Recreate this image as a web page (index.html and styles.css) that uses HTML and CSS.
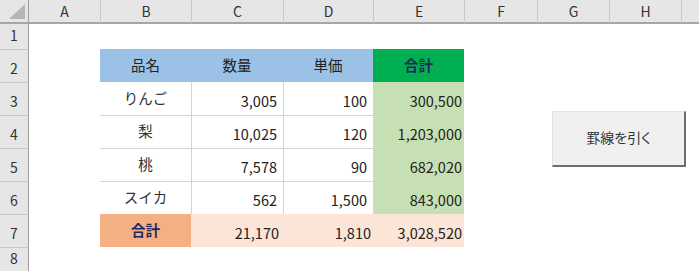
FILE: index.html
```html
<!DOCTYPE html>
<html lang="ja">
<head>
<meta charset="utf-8">
<title>罫線を引く</title>
<link rel="stylesheet" href="styles.css">
</head>
<body>
<div class="sheet">
  <div class="corner"><div class="tri"></div></div>
  <div class="ch">A</div>
  <div class="ch">B</div>
  <div class="ch">C</div>
  <div class="ch">D</div>
  <div class="ch">E</div>
  <div class="ch">F</div>
  <div class="ch">G</div>
  <div class="ch">H</div>
  <div class="ch"></div>

  <div class="rh first">1</div>
  <div class="rest9"></div>

  <div class="rh">2</div>
  <div class="c"></div>
  <div class="c ctr hblue">品名</div>
  <div class="c ctr hblue">数量</div>
  <div class="c ctr hblue">単価</div>
  <div class="c ctr hgreen">合計</div>
  <div class="rest4"></div>

  <div class="rh">3</div>
  <div class="c"></div>
  <div class="c ctr item">りんご</div>
  <div class="c num qty vl">3,005</div>
  <div class="c num qty vl">100</div>
  <div class="c num tot">300,500</div>
  <div class="rest4"></div>

  <div class="rh">4</div>
  <div class="c"></div>
  <div class="c ctr item ht">梨</div>
  <div class="c num qty vl ht">10,025</div>
  <div class="c num qty vl ht">120</div>
  <div class="c num tot">1,203,000</div>
  <div class="rest4"></div>

  <div class="rh">5</div>
  <div class="c"></div>
  <div class="c ctr item ht">桃</div>
  <div class="c num qty vl ht">7,578</div>
  <div class="c num qty vl ht">90</div>
  <div class="c num tot">682,020</div>
  <div class="rest4"></div>

  <div class="rh">6</div>
  <div class="c"></div>
  <div class="c ctr item ht">スイカ</div>
  <div class="c num qty vl ht">562</div>
  <div class="c num qty vl ht">1,500</div>
  <div class="c num tot">843,000</div>
  <div class="rest4"></div>

  <div class="rh">7</div>
  <div class="c"></div>
  <div class="c ctr sumlabel">合計</div>
  <div class="c num sum sumc">21,170</div>
  <div class="c num sum">1,810</div>
  <div class="c num sum">3,028,520</div>
  <div class="rest4"></div>

  <div class="rh">8</div>
  <div class="rest9"></div>

  <button class="btn" type="button">罫線を引く</button>
</div>
</body>
</html>
```

FILE: styles.css
```css
html, body {
  margin: 0;
  padding: 0;
  background: #ffffff;
}

.sheet {
  position: relative;
  width: 699px;
  height: 271px;
  overflow: hidden;
  display: grid;
  grid-template-columns: 29px 71px 91px 92px 90px 91px 73px 72px 72px 1fr;
  grid-template-rows: 24px 25px 33px 33px 33px 33px 33px 33px 1fr;
  font-family: "Noto Sans CJK JP", "Noto Sans", sans-serif;
  font-size: 14.5px;
  line-height: 20px;
  color: #222222;
}

.corner {
  background: #e6e6e6;
  border-right: 1px solid #9e9e9e;
  border-bottom: 2px solid #a6a6a6;
  box-sizing: border-box;
  display: flex;
  justify-content: flex-end;
  align-items: flex-end;
  padding: 0 3px 3px 0;
}

.tri {
  width: 16px;
  height: 15px;
  background: #b5b5b5;
  clip-path: polygon(100% 0, 100% 100%, 0 100%);
}

.ch {
  background: #e6e6e6;
  border-left: 1px solid #c8c8c8;
  border-bottom: 2px solid #a6a6a6;
  box-sizing: border-box;
  display: flex;
  align-items: center;
  justify-content: center;
  color: #333333;
  font-size: 14px;
  padding-bottom: 1px;
}

.ch:nth-child(2) {
  border-left: none;
}

.rh {
  background: #e6e6e6;
  border-right: 1px solid #9e9e9e;
  border-top: 1px solid #c8c8c8;
  box-sizing: border-box;
  display: flex;
  align-items: flex-end;
  justify-content: center;
  padding-bottom: 4px;
  color: #333333;
  font-size: 14px;
}

.rh.first {
  border-top: none;
}

.rest9 {
  grid-column: span 9;
}

.rest4 {
  grid-column: span 4;
}

.c {
  box-sizing: border-box;
  display: flex;
  align-items: flex-end;
  padding-bottom: 4px;
  white-space: nowrap;
}

.ctr {
  justify-content: center;
  padding-bottom: 7px;
}

.num {
  justify-content: flex-end;
  padding-right: 2px;
}

.qty {
  padding-right: 6px;
}

.vl {
  border-left: 1px solid #d4d4d4;
}

.ht {
  border-top: 1px solid #d4d4d4;
}

.item {
  color: #333333;
}

.hblue {
  background: #9bc2e6;
  color: #222222;
}

.hgreen {
  background: #00b050;
  color: #1c2a5c;
  font-weight: 700;
}

.tot {
  background: #c6e0b4;
}

.sumlabel {
  background: #f4b084;
  color: #1c2a5c;
  font-weight: 700;
}

.sum {
  background: #fce4d6;
}

.sumc {
  padding-right: 4px;
}

.btn {
  position: absolute;
  left: 552px;
  top: 111px;
  width: 134px;
  height: 56px;
  margin: 0;
  padding: 0 0 4px 0;
  background: #f0f0f0;
  border-top: 1px solid #e2e2e2;
  border-left: 1px solid #e2e2e2;
  border-right: 2px solid #6e6e6e;
  border-bottom: 2px solid #6e6e6e;
  font-family: "Noto Sans CJK JP", "Noto Sans", sans-serif;
  font-size: 14px;
  font-feature-settings: "palt";
  letter-spacing: 0;
  color: #333333;
  line-height: 20px;
}
```
